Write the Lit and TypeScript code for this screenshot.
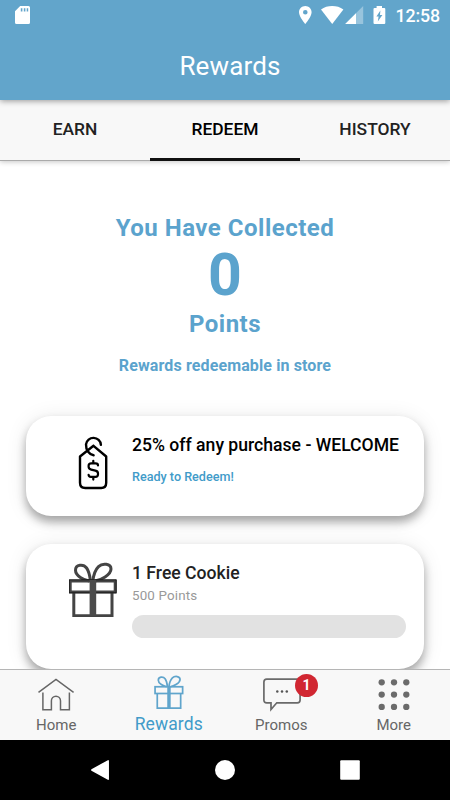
import { LitElement, html, css, svg } from "lit";
import { customElement } from "lit/decorators.js";
import { classMap } from "lit/directives/class-map.js";

const sdCard = html`<svg width="15" height="18" viewBox="0 0 15 18">
  <path fill="#fff" fill-rule="evenodd" d="M5.2 0H13.5Q15 0 15 1.5V16.5Q15 18 13.5 18H1.5Q0 18 0 16.5V5.2ZM5.8 2.2V5.4H7.4V2.2ZM8.8 2.2V5.4H10.4V2.2ZM11.7 2.2V5.4H13.2V2.2Z"/>
</svg>`;

const statusIcons = html`<svg width="88" height="18" viewBox="0 0 88 18">
  <path fill="#fff" fill-rule="evenodd" d="M6.3 0C2.8 0 0 2.8 0 6.3C0 11 6.3 18 6.3 18S12.6 11 12.6 6.3C12.6 2.8 9.8 0 6.3 0ZM6.3 4A2.3 2.3 0 1 1 6.3 8.6A2.3 2.3 0 1 1 6.3 4Z"/>
  <path fill="#fff" d="M33.2 17.9L22 3.4C25.2 1.2 29 0 33.2 0S41.2 1.2 44.4 3.4Z"/>
  <path fill="#fff" fill-opacity=".35" d="M64.2 0V18H46.2Z"/>
  <path fill="#fff" d="M57 7.2V18H46.2Z"/>
  <path fill="#fff" fill-rule="evenodd" d="M77.6 0H83V1.9H85.2Q86.3 1.9 86.3 3V17Q86.3 18 85.2 18H75.6Q74.5 18 74.5 17V3Q74.5 1.9 75.6 1.9H77.6ZM81.4 4.4L77.4 10.4H79.6L78.8 15.6L83.4 8.9H81Z"/>
</svg>`;

const tagIcon = html`<svg width="31" height="56" viewBox="0 0 31 56" fill="none" stroke="#000" stroke-width="2.4" stroke-linecap="round" stroke-linejoin="round">
  <path d="M15.5 10.8L28.2 21.5V47.8Q28.2 53 23.2 53H7.3Q2 53 2 47.8V21.5L15.5 10.8"/>
  <path d="M22.9 9.8A7.5 7.5 0 0 0 8 9.3C7.7 15 11.5 19.8 15.6 20.3"/>
  <path d="M20 30.4Q20 28.3 17.6 28.3H13.2Q10.6 28.3 10.6 30.8V31.6Q10.6 34 13.2 34.6L17.4 35.6Q20 36.2 20 38.4V39.2Q20 41.8 17.4 41.8H12.9Q10.6 41.8 10.6 39.8M15.3 25.8V28.2M15.3 42V44.6" stroke-width="2.2"/>
</svg>`;

const giftShapes = svg`
  <path d="M20.2 18C15 17.3 6.5 12.8 6.5 7.2C6.5 1.2 14.5.8 17.6 5C19.8 8 20.9 13 21.5 18"/>
  <path d="M26 18C31.5 17.3 42 11.8 42 6C42 .6 33.5-.2 29.5 3.6C26 7 24.5 12.5 23.8 18"/>
  <rect x="1.2" y="18" width="45" height="11"/>
  <path d="M4.8 29V52.7H43V29"/>`;

const giftIcon = html`<svg width="48" height="55" viewBox="0 -1 48 55" fill="none" stroke="#444" stroke-width="3">
  ${giftShapes}
  <path stroke="#111" stroke-width=".8" d="M.2 16.8H47.2V29.8H.2Z"/>
  <path stroke="#4b4b4b" stroke-width="6.6" d="M23.9 17V52.8"/>
</svg>`;

const giftTab = html`<svg width="30" height="34" viewBox="-.3 -1.2 48.5 55.5" fill="none" stroke="#60a5cc" stroke-width="2.8">
  ${giftShapes}
  <path stroke-width="5.6" d="M23.9 17V53"/>
</svg>`;

const homeTab = html`<svg width="36" height="34" viewBox="0 0 36 34" fill="none" stroke="#666" stroke-width="1.5">
  <path d="M.5 14.3L18 1.4L35.6 14.3M4.9 14.5V31.8H13.4V22.8A4.55 4.55 0 0 1 22.5 22.8V31.8H31.4V14.5"/>
</svg>`;

const promoTab = html`<svg width="38" height="34" viewBox="0 0 38 34">
  <path fill="none" stroke="#6a6a6a" stroke-width="1.7" d="M3.7 1.2H34.3Q37.1 1.2 37.1 4V22Q37.1 24.8 34.3 24.8H13.8L8 31.5V24.8H3.7Q.9 24.8.9 22V4Q.9 1.2 3.7 1.2Z"/>
  <g fill="#555"><circle cx="14.3" cy="13.4" r="1.25"/><circle cx="19" cy="13.4" r="1.25"/><circle cx="23.8" cy="13.4" r="1.25"/></g>
</svg>`;

const moreTab = html`<svg width="32" height="34" viewBox="0 0 32 34" fill="#6b6b6b">
  ${[4.3, 16.6, 28.9].map((y) => [3.7, 16, 28.3].map((x) => svg`<circle cx=${x} cy=${y} r="3.15"/>`))}
</svg>`;

@customElement("reward-card")
class RewardCard extends LitElement {
  static properties = {
    heading: {},
    note: {},
    icon: { attribute: false },
    ready: { type: Boolean },
  };
  declare heading: string;
  declare note: string;
  declare icon: unknown;
  declare ready: boolean;

  static styles = css`
    :host { display: block; }
    .card {
      box-sizing: border-box; height: 124.5px; border-radius: 25px; background: #fff;
      display: grid; grid-template-columns: 80px 1fr; column-gap: 26px; padding: 0 18px 0 0;
      box-shadow: 0 6px 10px rgba(0, 0, 0, .32), 0 2px 22px rgba(0, 0, 0, .09);
    }
    .ready { height: 100px; }
    .icon { display: flex; justify-content: flex-end; align-items: flex-start; padding-top: 18px; margin-right: -10.5px; }
    .ready .icon { padding-top: 18.5px; margin-right: -2.5px; }
    h3 { margin: 18px 0 0; font-size: 17.6px; line-height: 22px; font-weight: 500; color: #222; white-space: nowrap; }
    .ready h3 { color: #000; }
    p { margin: 2px 0 0; font-size: 13.4px; line-height: 20px; letter-spacing: .15px; font-weight: 400; color: #999; }
    .ready p { margin-top: 11px; font-size: 12.6px; font-weight: 500; letter-spacing: 0; color: #419bc9; }
    .track { height: 23px; border-radius: 12px; background: #e2e2e2; margin-top: 9px; }
  `;
  render() {
    return html`<div class=${classMap({ card: true, ready: this.ready })}>
      <div class="icon">${this.icon}</div>
      <div>
        <h3>${this.heading}</h3>
        <p>${this.note}</p>
        ${this.ready ? "" : html`<div class="track"></div>`}
      </div>
    </div>`;
  }
}

@customElement("app-root")
class AppRoot extends LitElement {
  static styles = css`
    :host {
      display: flex; flex-direction: column; width: 450px; height: 800px; overflow: hidden;
      background: #fff; font-family: Roboto, "Liberation Sans", sans-serif;
    }
    svg { display: block; flex: none; }
    header { flex: none; height: 100px; background: #62a5cb; color: #fff; z-index: 2; box-shadow: 0 1px 6px rgba(0, 0, 0, .4); }
    .status { display: flex; align-items: center; height: 30px; padding: 0 10px 0 15px; box-sizing: border-box; }
    .status .icons { margin-left: auto; margin-right: 8px; }
    .time { font-size: 17.8px; font-weight: 500; line-height: 30px; letter-spacing: -.1px; padding-top: 2px; }
    h1 { margin: 0; font-size: 26px; line-height: 72px; font-weight: 400; text-align: center; letter-spacing: .15px; padding-left: 10px; }
    .tabs { flex: none; height: 60px; display: grid; grid-template-columns: repeat(3, 1fr); background: #f8f8f8; border-bottom: 1px solid #aaa; box-shadow: 0 1px 5px rgba(0, 0, 0, .22); z-index: 1; }
    .tab { box-sizing: border-box; text-align: center; font-size: 17.4px; line-height: 58px; font-weight: 500; color: #222; border-bottom: 2px solid transparent; }
    .tab.on { border-bottom: 3px solid #111; color: #000; }
    main { flex: 1; min-height: 0; overflow: hidden; color: #5ba3cd; text-align: center; font-weight: 700; }
    .big { font-size: 24px; line-height: 30px; letter-spacing: .5px; }
    .top { margin-top: 52px; }
    .count { font-size: 59px; line-height: 64px; margin-bottom: 2px; }
    .store { font-size: 16px; line-height: 24px; margin-top: 15px; letter-spacing: .12px; }
    .list { display: grid; gap: 28px; margin: 38px 26px 0; text-align: left; }
    nav { flex: none; box-sizing: border-box; height: 71px; display: grid; grid-template-columns: repeat(4, 1fr); background: #f8f8f8; border-top: 1px solid #b5b5b5; z-index: 2; }
    .item { display: flex; flex-direction: column; align-items: center; color: #666; font-size: 15px; line-height: 20px; font-weight: 400; }
    .pic { position: relative; height: 36px; margin-bottom: 9px; display: flex; align-items: center; }
    .item svg { margin-top: 14px; }
    .item.on { color: #419bc9; font-size: 17.5px; line-height: 18px; letter-spacing: .1px; }
    .item.on svg { margin-top: 8px; }
    .badged { left: .6px; }
    .badge { position: absolute; left: 32px; top: 3.5px; width: 23.5px; height: 23.5px; border-radius: 50%; background: #d12732; color: #fff; font-size: 14px; line-height: 22px; font-weight: 700; text-align: center; letter-spacing: 0; }
    footer { flex: none; height: 60px; background: #000; }
  `;

  render() {
    const items = [
      { label: "Home", icon: homeTab },
      { label: "Rewards", icon: giftTab, on: true },
      { label: "Promos", icon: promoTab, badge: "1" },
      { label: "More", icon: moreTab },
    ];
    return html`
      <header>
        <div class="status">${sdCard}<div class="icons">${statusIcons}</div><span class="time">12:58</span></div>
        <h1>Rewards</h1>
      </header>
      <div class="tabs">
        ${["EARN", "REDEEM", "HISTORY"].map((t, i) => html`<div class=${classMap({ tab: true, on: i === 1 })}>${t}</div>`)}
      </div>
      <main>
        <div class="big top">You Have Collected</div>
        <div class="count">0</div>
        <div class="big">Points</div>
        <div class="store">Rewards redeemable in store</div>
        <div class="list">
          <reward-card ready .icon=${tagIcon} heading="25% off any purchase - WELCOME" note="Ready to Redeem!"></reward-card>
          <reward-card .icon=${giftIcon} heading="1 Free Cookie" note="500 Points"></reward-card>
        </div>
      </main>
      <nav>
        ${items.map((it) => html`<div class=${classMap({ item: true, on: !!it.on })}>
          <div class=${classMap({ pic: true, badged: !!it.badge })}>${it.icon}${it.badge ? html`<span class="badge">${it.badge}</span>` : ""}</div>
          <span>${it.label}</span>
        </div>`)}
      </nav>
      <footer>
        <svg width="450" height="60" viewBox="0 0 450 60" fill="#fff">
          <path stroke="#fff" stroke-linejoin="round" stroke-width="1.5" d="M91.8 30L108.2 20.8V39.2Z"/>
          <circle cx="225" cy="30" r="10"/>
          <rect x="340.2" y="20.2" width="19.6" height="19.6" rx="1"/>
        </svg>
      </footer>`;
  }
}
